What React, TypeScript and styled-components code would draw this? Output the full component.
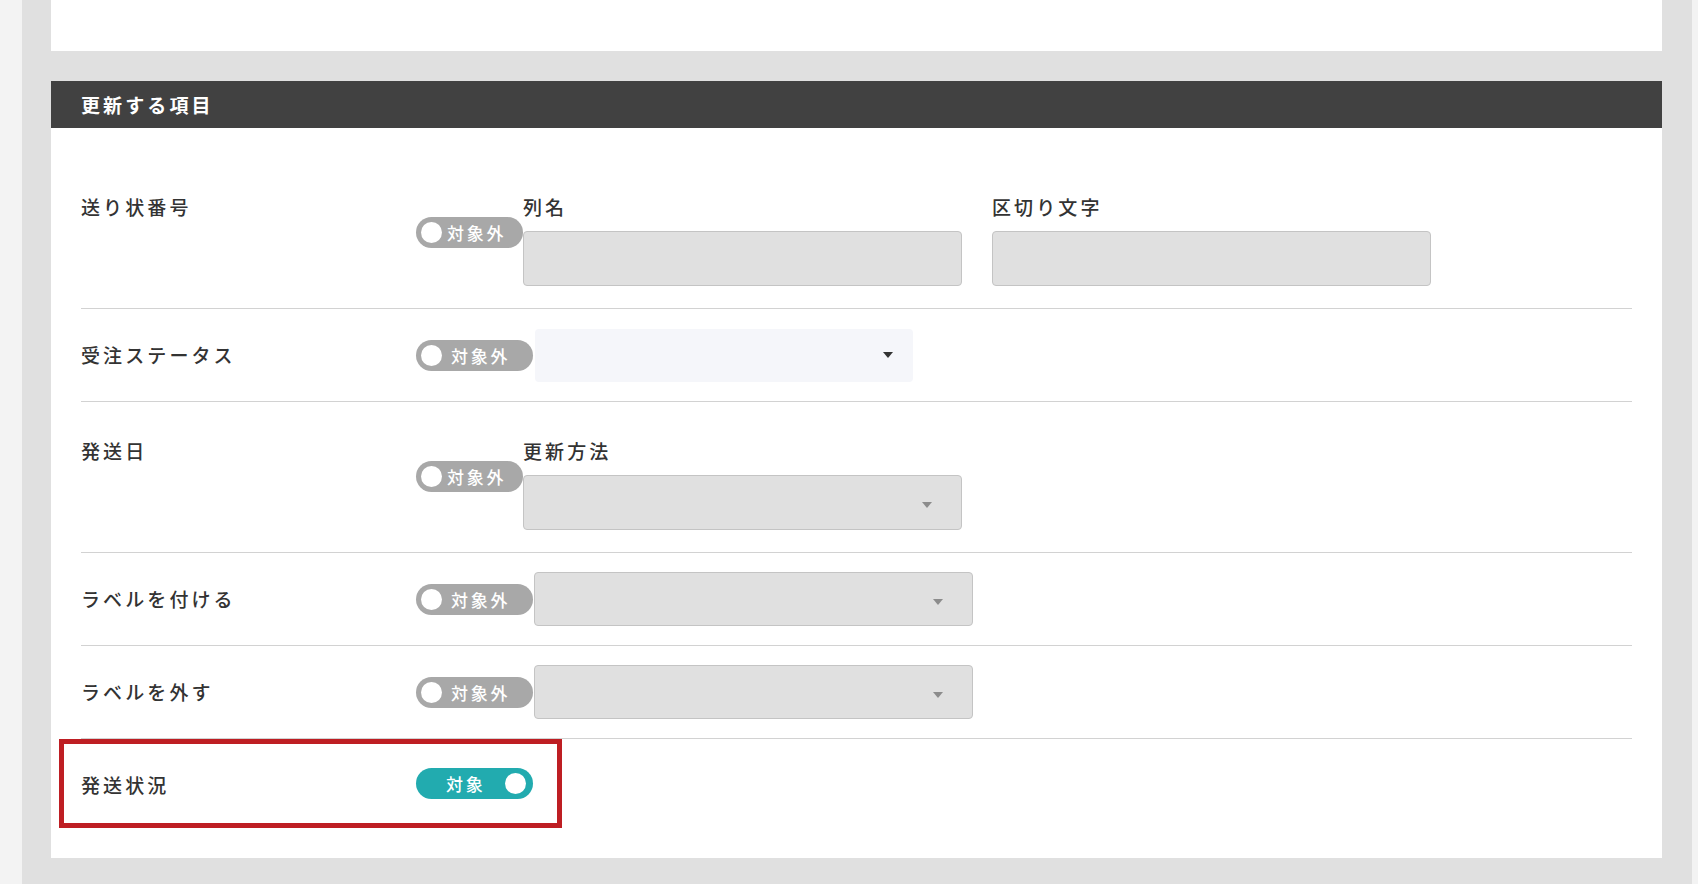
import React from "react";
import styled, { createGlobalStyle } from "styled-components";

const GlobalStyle = createGlobalStyle`
  html, body {
    margin: 0;
    padding: 0;
    background: #f3f3f3;
  }
  body {
    font-family: "Noto Sans CJK JP", "Noto Sans", "Liberation Sans", sans-serif;
    color: #333;
  }
  * { box-sizing: border-box; }
`;

const Frame = styled.div`
  margin-left: 22px;
  width: 1670px;
  min-height: 884px;
  background: #e0e0e0;
  padding: 0 30px 27px 29px;
`;

const TopCard = styled.div`
  height: 51px;
  background: #fff;
`;

const Section = styled.section`
  margin-top: 30px;
  background: #fff;
`;

const SectionHeader = styled.h2`
  margin: 0;
  height: 47px;
  display: flex;
  align-items: center;
  padding-left: 30px;
  background: #414141;
  color: #fff;
  font-size: 19px;
  font-weight: 700;
  letter-spacing: 3.1px;
`;

const SectionBody = styled.div`
  padding: 30px 30px 27px;
`;

const Row = styled.div<{ $fields?: boolean; $last?: boolean }>`
  position: relative;
  display: grid;
  grid-template-columns: 335px 1fr;
  align-items: ${(p) => (p.$fields ? "start" : "center")};
  padding: ${(p) => (p.$fields ? "37px 0 22px" : "19px 0")};
  border-bottom: ${(p) => (p.$last ? "none" : "1px solid #d2d2d2")};
`;

const RowLabel = styled.div`
  font-size: 19px;
  font-weight: 500;
  line-height: 24px;
  letter-spacing: 3.1px;
  color: #333;
`;

const Controls = styled.div<{ $fields?: boolean }>`
  display: flex;
  align-items: ${(p) => (p.$fields ? "flex-start" : "center")};
  min-height: 54px;
`;

const ToggleCell = styled.div<{ $fields?: boolean; $raise?: number }>`
  flex: none;
  display: flex;
  margin-top: ${(p) => (p.$fields ? "22px" : "0")};
  margin-bottom: ${(p) => p.$raise ?? 0}px;
`;

const ToggleTrack = styled.span<{ $on?: boolean; $compact?: boolean }>`
  display: inline-flex;
  align-items: center;
  width: ${(p) => (p.$compact ? "107px" : "117px")};
  height: 31px;
  border-radius: 16px;
  background: ${(p) => (p.$on ? "#22abaf" : "#a8a8a8")};
  padding: ${(p) => (p.$on ? "0 7px 0 30px" : "0 5px")};
  color: #fff;
  font-size: 17px;
  font-weight: 500;
  letter-spacing: 2.8px;
  line-height: 1;
`;

const Knob = styled.span<{ $on?: boolean }>`
  flex: none;
  width: 21px;
  height: 21px;
  border-radius: 50%;
  background: #fff;
  margin-left: ${(p) => (p.$on ? "auto" : "0")};
`;

const ToggleText = styled.span<{ $gap: number }>`
  margin-left: ${(p) => p.$gap}px;
  white-space: nowrap;
`;

const Fields = styled.div`
  display: flex;
  gap: 30px;
`;

const Field = styled.div`
  display: flex;
  flex-direction: column;
  width: 439px;
`;

const FieldLabel = styled.div`
  font-size: 19px;
  font-weight: 500;
  line-height: 24px;
  letter-spacing: 3.1px;
  color: #333;
  margin-bottom: 12px;
`;

const TextBox = styled.div`
  height: 55px;
  background: #e0e0e0;
  border: 1px solid #c4c4c4;
  border-radius: 4px;
`;

const SelectBox = styled.div<{
  $plain?: boolean;
  $width: number;
  $height: number;
  $offset?: number;
}>`
  display: flex;
  align-items: center;
  justify-content: flex-end;
  flex: none;
  width: ${(p) => p.$width}px;
  height: ${(p) => p.$height}px;
  margin-left: ${(p) => p.$offset ?? 0}px;
  padding-right: ${(p) => (p.$plain ? "20px" : "29px")};
  background: ${(p) => (p.$plain ? "#f5f6fa" : "#e0e0e0")};
  border: ${(p) => (p.$plain ? "none" : "1px solid #c4c4c4")};
  border-radius: 4px;
`;

const Caret = styled.span<{ $dark?: boolean }>`
  width: 0;
  height: 0;
  border-left: 5px solid transparent;
  border-right: 5px solid transparent;
  border-top: 6px solid ${(p) => (p.$dark ? "#333" : "#8c8c8c")};
  margin-top: ${(p) => (p.$dark ? "0" : "5px")};
`;

/* red frame drawn over the highlighted row */
const Highlight = styled.div`
  position: absolute;
  left: -22px;
  top: 0;
  width: 503px;
  height: 89px;
  border: 5px solid #be1e23;
  pointer-events: none;
`;

type ToggleProps = { on?: boolean; compact?: boolean };

function Toggle({ on, compact }: ToggleProps) {
  if (on) {
    return (
      <ToggleTrack $on>
        <span>対象</span>
        <Knob $on />
      </ToggleTrack>
    );
  }
  return (
    <ToggleTrack $compact={compact}>
      <Knob />
      <ToggleText $gap={compact ? 5 : 9}>対象外</ToggleText>
    </ToggleTrack>
  );
}

export default function App() {
  return (
    <>
      <GlobalStyle />
      <Frame>
        <TopCard />
        <Section>
          <SectionHeader>更新する項目</SectionHeader>
          <SectionBody>
            <Row $fields>
              <RowLabel>送り状番号</RowLabel>
              <Controls $fields>
                <ToggleCell $fields>
                  <Toggle compact />
                </ToggleCell>
                <Fields>
                  <Field>
                    <FieldLabel>列名</FieldLabel>
                    <TextBox />
                  </Field>
                  <Field>
                    <FieldLabel>区切り文字</FieldLabel>
                    <TextBox />
                  </Field>
                </Fields>
              </Controls>
            </Row>

            <Row>
              <RowLabel>受注ステータス</RowLabel>
              <Controls>
                <ToggleCell>
                  <Toggle />
                </ToggleCell>
                <SelectBox $plain $width={378} $height={53} $offset={2}>
                  <Caret $dark />
                </SelectBox>
              </Controls>
            </Row>

            <Row $fields>
              <RowLabel>発送日</RowLabel>
              <Controls $fields>
                <ToggleCell $fields>
                  <Toggle compact />
                </ToggleCell>
                <Fields>
                  <Field>
                    <FieldLabel>更新方法</FieldLabel>
                    <SelectBox $width={439} $height={55}>
                      <Caret />
                    </SelectBox>
                  </Field>
                </Fields>
              </Controls>
            </Row>

            <Row>
              <RowLabel>ラベルを付ける</RowLabel>
              <Controls>
                <ToggleCell>
                  <Toggle />
                </ToggleCell>
                <SelectBox $width={439} $height={54} $offset={1}>
                  <Caret />
                </SelectBox>
              </Controls>
            </Row>

            <Row>
              <RowLabel>ラベルを外す</RowLabel>
              <Controls>
                <ToggleCell>
                  <Toggle />
                </ToggleCell>
                <SelectBox $width={439} $height={54} $offset={1}>
                  <Caret />
                </SelectBox>
              </Controls>
            </Row>

            <Row $last>
              <RowLabel>発送状況</RowLabel>
              <Controls>
                <ToggleCell $raise={4}>
                  <Toggle on />
                </ToggleCell>
              </Controls>
              <Highlight />
            </Row>
          </SectionBody>
        </Section>
      </Frame>
    </>
  );
}
